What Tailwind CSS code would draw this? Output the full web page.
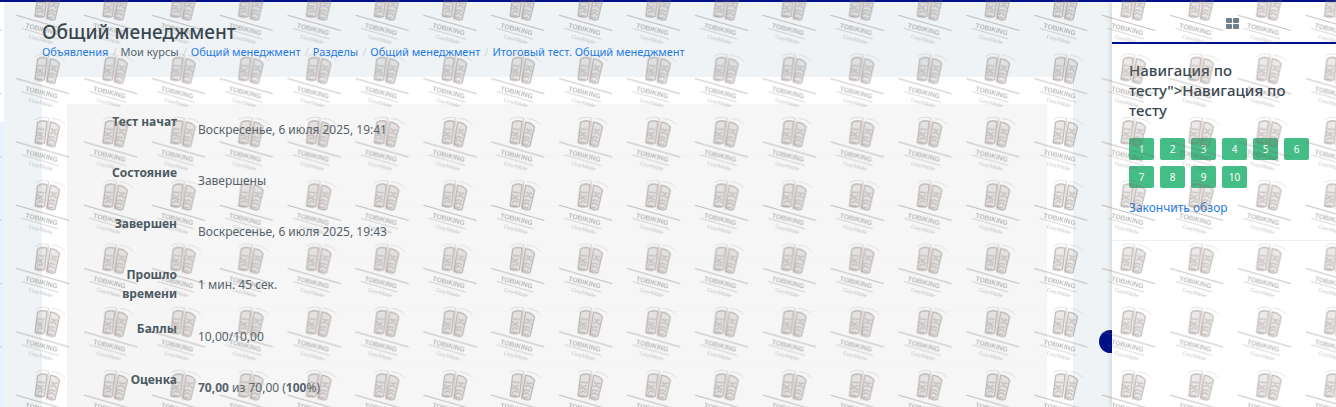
<!DOCTYPE html>
<html lang="ru">
<head>
    <meta charset="UTF-8">
    <meta name="viewport" content="width=device-width, initial-scale=1.0">
    <title>Общий менеджмент</title>
    <script src="https://cdn.jsdelivr.net/npm/@tailwindcss/browser@4"></script>
</head>
<body class="relative flex flex-col h-screen overflow-hidden bg-white font-['Noto_Sans',sans-serif] text-[#55636c]">

    <!-- Top bar -->
    <div class="h-0.5 shrink-0 bg-[#00108a]"></div>

    <div class="flex flex-1 min-h-0 overflow-hidden">
        <!-- Edge of the left menu -->
        <div class="w-1 shrink-0 pt-[120px]">
            <div class="h-full bg-[#e8f2fe]"></div>
        </div>

        <!-- Main Content -->
        <main class="relative flex-1 min-w-0 bg-[#eff3f5] pl-[38px] pr-[39px]">
            <header class="h-[75px] pt-4">
                <h1 class="text-[19px] leading-7 font-medium text-[#37474f]">Общий менеджмент</h1>
                <nav aria-label="Навигация">
                    <ol class="flex gap-1 text-[11px] leading-3">
                        <li><a href="#" class="text-[#1e7be4]">Объявления</a></li>
                        <li class="text-[#cfd6da]">/</li>
                        <li>Мои курсы</li>
                        <li class="text-[#cfd6da]">/</li>
                        <li><a href="#" class="text-[#1e7be4]">Общий менеджмент</a></li>
                        <li class="text-[#cfd6da]">/</li>
                        <li><a href="#" class="text-[#1e7be4]">Разделы</a></li>
                        <li class="text-[#cfd6da]">/</li>
                        <li><a href="#" class="text-[#1e7be4]">Общий менеджмент</a></li>
                        <li class="text-[#cfd6da]">/</li>
                        <li><a href="#" class="text-[#1e7be4]">Итоговый тест. Общий менеджмент</a></li>
                    </ol>
                </nav>
            </header>

            <!-- Attempt summary -->
            <section class="bg-white pl-[25px] pr-[26px] pt-[27px]">
                <table class="w-full bg-[#f6f6f6] text-xs leading-[19px]">
                    <tbody>
                        <tr class="h-[51px]">
                            <th scope="row" class="w-[120px] pl-6 pr-[10px] py-2 align-top text-right font-bold bg-[#f5f5f5] text-[#4b5a63]">Тест начат</th>
                            <td class="px-[11px] border-b border-[#f3f3f3]">Воскресенье, 6 июля 2025, 19:41</td>
                        </tr>
                        <tr class="h-[51px]">
                            <th scope="row" class="pl-6 pr-[10px] py-2 align-top text-right font-bold bg-[#f5f5f5] text-[#4b5a63]">Состояние</th>
                            <td class="px-[11px] border-b border-[#f3f3f3]">Завершены</td>
                        </tr>
                        <tr class="h-[51px]">
                            <th scope="row" class="pl-6 pr-[10px] py-2 align-top text-right font-bold bg-[#f5f5f5] text-[#4b5a63]">Завершен</th>
                            <td class="px-[11px] border-b border-[#f3f3f3]">Воскресенье, 6 июля 2025, 19:43</td>
                        </tr>
                        <tr class="h-[51px]">
                            <th scope="row" class="pl-6 pr-[10px] py-2 align-top text-right font-bold bg-[#f5f5f5] text-[#4b5a63]">Прошло времени</th>
                            <td class="px-[11px] border-b border-[#f3f3f3]">1 мин. 45 сек.</td>
                        </tr>
                        <tr class="h-[51px]">
                            <th scope="row" class="pl-6 pr-[10px] py-2 align-top text-right font-bold bg-[#f5f5f5] text-[#4b5a63]">Баллы</th>
                            <td class="px-[11px] border-b border-[#f3f3f3]">10,00/10,00</td>
                        </tr>
                        <tr class="h-[51px]">
                            <th scope="row" class="pl-6 pr-[10px] py-2 align-top text-right font-bold bg-[#f5f5f5] text-[#4b5a63]">Оценка</th>
                            <td class="px-[11px]"><b>70,00</b> из 70,00 (<b>100</b>%)</td>
                        </tr>
                    </tbody>
                </table>
            </section>

            <!-- Drawer toggle, half hidden by the drawer -->
            <button type="button" aria-label="Скрыть панель" class="absolute -right-2.5 top-[328px] size-[23px] rounded-full bg-[#00108a]"></button>
        </main>

        <!-- Blocks drawer -->
        <aside class="relative w-[224px] shrink-0 bg-white shadow-[0_0_6px_rgba(0,0,0,0.18)]">
            <div class="flex justify-center h-[42px] pl-4 pt-0.5 border-b-2 border-[#00108a]">
                <button type="button" aria-label="Блоки" class="text-[#6f7f8c]">
                    <svg class="w-[13px] h-[11px]" viewBox="0 0 13 11" fill="currentColor">
                        <rect x="0" y="0" width="6" height="5" rx="1"/>
                        <rect x="7" y="0" width="6" height="5" rx="1"/>
                        <rect x="0" y="6" width="6" height="5" rx="1"/>
                        <rect x="7" y="6" width="6" height="5" rx="1"/>
                    </svg>
                </button>
            </div>
            <div class="pl-[17px] pr-4 pt-4 pb-6 border-b border-[#eceeef]">
                <h2 class="text-[15px] leading-5 font-medium text-[#37474f]">Навигация по тесту"&gt;Навигация по тесту</h2>
                <div class="flex flex-wrap gap-x-1.5 gap-y-1.5 pt-[18px] text-[10px] text-white">
                    <a href="#" class="flex items-center justify-center w-[25px] h-[22px] rounded-xs bg-[#45bd87]">1</a>
                    <a href="#" class="flex items-center justify-center w-[25px] h-[22px] rounded-xs bg-[#45bd87]">2</a>
                    <a href="#" class="flex items-center justify-center w-[25px] h-[22px] rounded-xs bg-[#45bd87]">3</a>
                    <a href="#" class="flex items-center justify-center w-[25px] h-[22px] rounded-xs bg-[#45bd87]">4</a>
                    <a href="#" class="flex items-center justify-center w-[25px] h-[22px] rounded-xs bg-[#45bd87]">5</a>
                    <a href="#" class="flex items-center justify-center w-[25px] h-[22px] rounded-xs bg-[#45bd87]">6</a>
                    <a href="#" class="flex items-center justify-center w-[25px] h-[22px] rounded-xs bg-[#45bd87]">7</a>
                    <a href="#" class="flex items-center justify-center w-[25px] h-[22px] rounded-xs bg-[#45bd87]">8</a>
                    <a href="#" class="flex items-center justify-center w-[25px] h-[22px] rounded-xs bg-[#45bd87]">9</a>
                    <a href="#" class="flex items-center justify-center w-[25px] h-[22px] rounded-xs bg-[#45bd87]">10</a>
                </div>
                <a href="#" class="block pt-3 text-xs leading-4 text-[#1e7be4]">Закончить обзор</a>
            </div>
        </aside>
    </div>

    <!-- Watermark -->
    <svg class="absolute inset-0 w-full h-full pointer-events-none" aria-hidden="true">
        <defs>
            <pattern id="mark" x="16" y="-11.6" width="67.87" height="63.3" patternUnits="userSpaceOnUse">
                <g fill="none" stroke="#6e625e" stroke-opacity="0.38" stroke-linecap="round">
                    <path d="M19.5 4.5q4-3 9-2.3l4 .8M36 3.5q7 .5 10 3.5l3 2.5" stroke-width="0.7" stroke-opacity="0.25"/>
                    <path d="M21.5 7.5q4-3 9.500-1l-2.500 21.500q-5 2-9.500-.5z" fill="#8a7a74" fill-opacity="0.16" stroke-width="1.3"/>
                    <path d="M34.5 7q6 .5 9 5l-4.500 19q-4.500 2-8-1.500z" fill="#8a7a74" fill-opacity="0.16" stroke-width="1.3"/>
                    <path d="M22.500 14l5.500 .5M21.500 17q3 3 5.500 .5M21 20.500q3-1.500 6 1M21.500 24.500q2-3 5-.5M20.500 27l5 .5M35.500 14q3 2 5 1M35 18q3-2 5 1.500M33.500 22.500q2-2 5 .5M33 26q2-3 5 .5M32.500 29l4 .5" stroke-width="1.8" stroke-opacity="0.25"/>
                    <path d="M32.5 4l-2 27" stroke="#9a7468" stroke-width="1.6" stroke-opacity="0.25"/>
                    <path d="M0.5 27L53 42" stroke-width="1"/>
                    <path d="M6 40L42 50.5" stroke-width="0.7"/>
                </g>
                <g font-family="Liberation Sans, sans-serif" fill="#5f5c5b">
                    <text x="9" y="39" font-size="6.8" font-weight="700" fill-opacity="0.42" transform="rotate(14 9 39)">TOBIKING</text>
                    <text x="12.5" y="49.5" font-size="5.2" font-style="italic" font-family="Liberation Serif, serif" fill-opacity="0.42" transform="rotate(15 12.5 49.5)">CozyNRabe</text>
                </g>
            </pattern>
        </defs>
        <rect width="100%" height="100%" fill="url(#mark)"/>
    </svg>

</body>
</html>
